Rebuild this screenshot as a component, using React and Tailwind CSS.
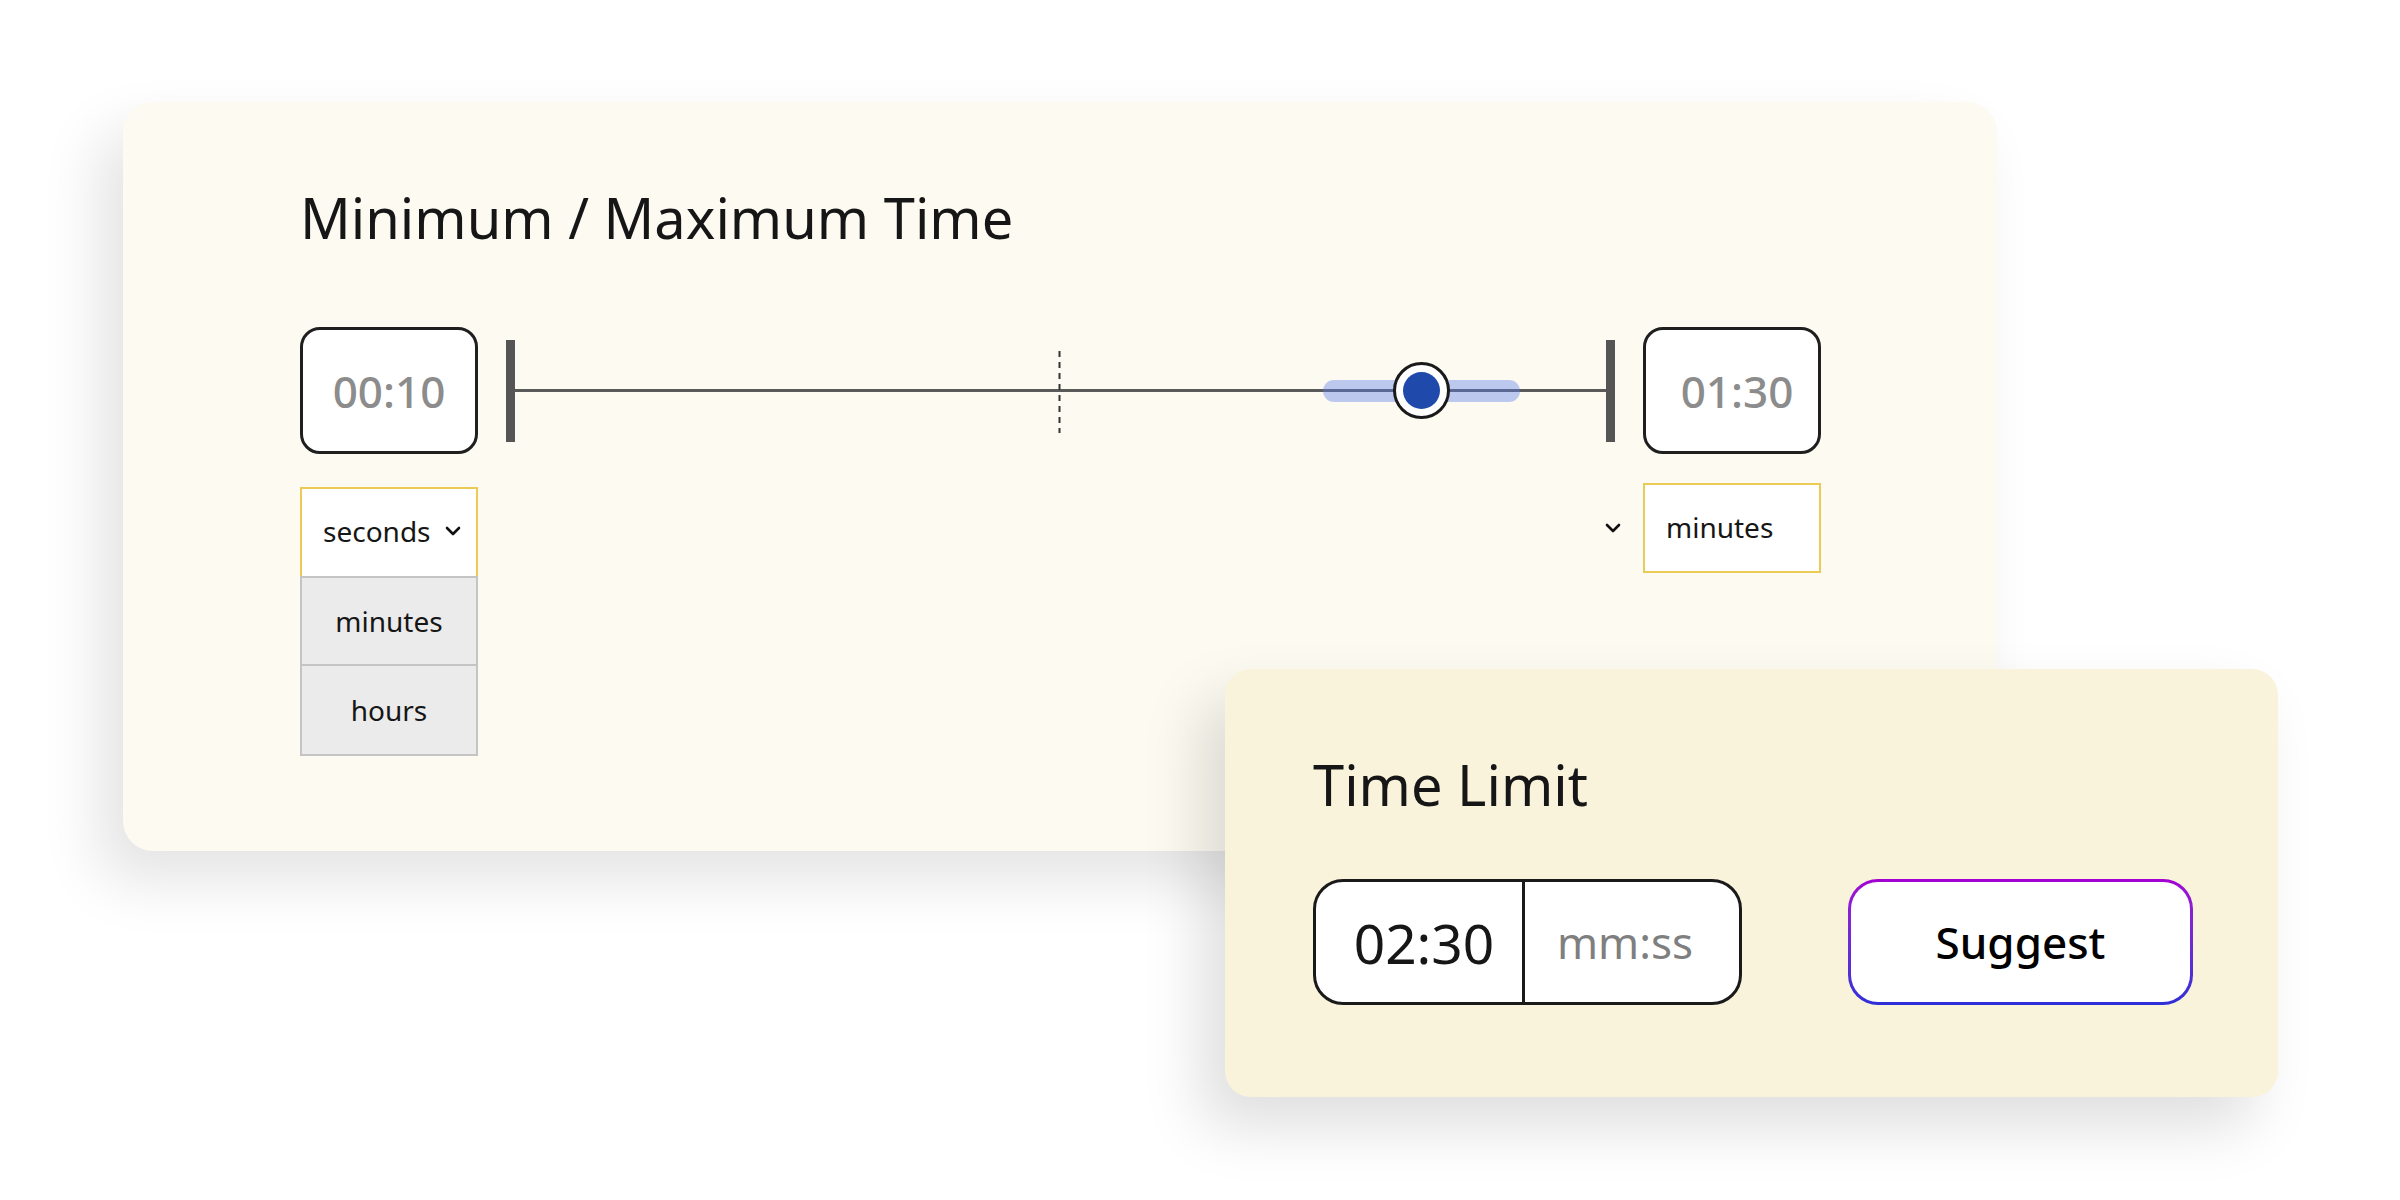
import React from "react";

function Chevron({ className = "" }) {
  return (
    <svg width="16" height="10" viewBox="0 0 16 10" className={className}>
      <path d="M2 2 L8 8 L14 2" fill="none" stroke="#111" strokeWidth="2.6" strokeLinecap="round" strokeLinejoin="round" />
    </svg>
  );
}

function TimeBox({ value, shift = false }) {
  return (
    <div className={shift ? "w-[178px] h-[127px] rounded-[20px] border-[3px] border-[#1f1f1f] bg-white flex items-center justify-center pl-[10px]" : "w-[178px] h-[127px] rounded-[20px] border-[3px] border-[#1f1f1f] bg-white flex items-center justify-center"}>
      <span className="text-[44px] leading-none font-medium text-[#8c8c8c]">{value}</span>
    </div>
  );
}

function Slider() {
  return (
    <div className="flex-1 flex items-center">
      <div className="w-[9px] h-[102px] bg-[#555]" />
      <div className="relative flex-1 h-[102px] flex items-center">
        <div className="w-full h-[3px] bg-[#5a5a5a]" />
        <svg className="absolute left-[543px] top-[11px]" width="3" height="82" viewBox="0 0 3 82">
          <line x1="1.5" y1="0" x2="1.5" y2="82" stroke="#333" strokeWidth="2" strokeDasharray="6 5" />
        </svg>
        <div className="absolute left-[808px] top-[40px] w-[197px] h-[22px] rounded-full bg-[#5b7ee8]/40" />
        <div className="absolute left-[878px] top-[22px] w-[57px] h-[57px] rounded-full border-[3px] border-[#1a1a1a] bg-white flex items-center justify-center">
          <div className="w-[37px] h-[37px] rounded-full bg-[#1f4aab]" />
        </div>
      </div>
      <div className="w-[9px] h-[102px] bg-[#555]" />
    </div>
  );
}

export default function App() {
  return (
    <div className="relative w-[2400px] h-[1200px] bg-white overflow-hidden font-['Noto_Sans',sans-serif] text-[#161616]">
      <div className="pl-[123px] pt-[102px]">
        <div className="w-[1874px] h-[749px] rounded-[30px] bg-[#fdfaf2] shadow-[-24px_30px_60px_rgba(0,0,0,0.11)] pl-[177px] pr-[176px] pt-[87px]">
          <h1 className="text-[56px] leading-none font-normal">Minimum / Maximum Time</h1>
          <div className="mt-[82px] flex items-center gap-[28px]">
            <TimeBox value="00:10" />
            <Slider />
            <TimeBox value="01:30" shift />
          </div>
          <div className="mt-[33px] flex items-start justify-between">
            <div className="w-[178px] flex flex-col">
              <div className="h-[89px] bg-white border-2 border-b-0 border-[#ebcb55] flex items-center justify-between pl-[21px] pr-[15px] pb-[3px]">
                <span className="text-[28px] leading-none">seconds</span>
                <Chevron />
              </div>
              <div className="h-[90px] bg-[#ebebeb] border-2 border-[#c4c4c4] flex items-center justify-center">
                <span className="text-[28px] leading-none">minutes</span>
              </div>
              <div className="h-[90px] bg-[#ebebeb] border-2 border-t-0 border-[#c4c4c4] flex items-center justify-center">
                <span className="text-[28px] leading-none">hours</span>
              </div>
            </div>
            <div className="-mt-[4px] flex items-center gap-[22px]">
              <Chevron />
              <div className="w-[178px] h-[90px] bg-white border-2 border-[#ebcb55] flex items-center pl-[21px] pb-[3px]">
                <span className="text-[28px] leading-none">minutes</span>
              </div>
            </div>
          </div>
        </div>
      </div>

      <div className="absolute left-[1225px] top-[669px] w-[1053px] h-[428px] rounded-[26px] bg-[#faf3dc] shadow-[-24px_30px_60px_rgba(0,0,0,0.13)] pl-[88px] pr-[85px] pt-[87px]">
        <h2 className="text-[56px] leading-none font-normal">Time Limit</h2>
        <div className="mt-[67px] flex items-center justify-between">
          <div className="w-[429px] h-[126px] rounded-[30px] border-[3px] border-[#1a1a1a] bg-white flex overflow-hidden">
            <div className="w-[209px] flex items-center justify-center border-r-[3px] border-[#1a1a1a] pl-[10px]">
              <span className="text-[55px] leading-none">02:30</span>
            </div>
            <div className="flex-1 flex items-center justify-center pr-[14px]">
              <span className="text-[44px] leading-none text-[#7f7f7f]">mm:ss</span>
            </div>
          </div>
          <div className="w-[345px] h-[126px] rounded-[30px] p-[3px] bg-linear-to-b from-[#a300d2] to-[#2e2ed8]">
            <div className="w-full h-full rounded-[27px] bg-white flex items-center justify-center">
              <span className="text-[44px] leading-none font-medium text-black">Suggest</span>
            </div>
          </div>
        </div>
      </div>
    </div>
  );
}
